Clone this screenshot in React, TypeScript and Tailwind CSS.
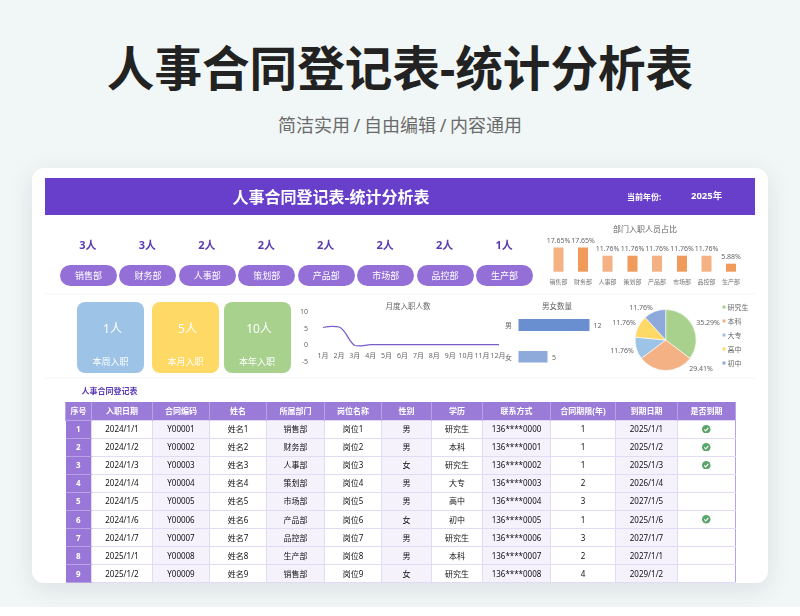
import React from "react";

const depts = [
  ["销售部", "3人"], ["财务部", "3人"], ["人事部", "2人"], ["策划部", "2人"],
  ["产品部", "2人"], ["市场部", "2人"], ["品控部", "2人"], ["生产部", "1人"],
];

const headers = ["序号", "入职日期", "合同编码", "姓名", "所属部门", "岗位名称", "性别", "学历", "联系方式", "合同期限(年)", "到期日期", "是否到期"];
const colClasses = ["w-[26px]", "w-[61px]", "w-[57px]", "w-[57px]", "w-[58px]", "w-[57px]", "w-[50px]", "w-[51px]", "w-[68px]", "w-[65px]", "w-[62px]", "w-[58px]"];

const rows: [string, string, string, string, string, string, string, string, string, string, boolean][] = [
  ["2024/1/1", "Y00001", "姓名1", "销售部", "岗位1", "男", "研究生", "136****0000", "1", "2025/1/1", true],
  ["2024/1/2", "Y00002", "姓名2", "财务部", "岗位2", "男", "本科", "136****0001", "1", "2025/1/2", true],
  ["2024/1/3", "Y00003", "姓名3", "人事部", "岗位3", "女", "研究生", "136****0002", "1", "2025/1/3", true],
  ["2024/1/4", "Y00004", "姓名4", "策划部", "岗位4", "男", "大专", "136****0003", "2", "2026/1/4", false],
  ["2024/1/5", "Y00005", "姓名5", "市场部", "岗位5", "男", "高中", "136****0004", "3", "2027/1/5", false],
  ["2024/1/6", "Y00006", "姓名6", "产品部", "岗位6", "女", "初中", "136****0005", "1", "2025/1/6", true],
  ["2024/1/7", "Y00007", "姓名7", "品控部", "岗位7", "男", "研究生", "136****0006", "3", "2027/1/7", false],
  ["2025/1/1", "Y00008", "姓名8", "生产部", "岗位8", "男", "本科", "136****0007", "2", "2027/1/1", false],
  ["2025/1/2", "Y00009", "姓名9", "销售部", "岗位9", "女", "研究生", "136****0008", "4", "2029/1/2", false],
];

const deptBars = [
  { x: 553.5, top: 247.5, label: "17.65%", name: "销售部", fill: "#f4b183" },
  { x: 578, top: 247.5, label: "17.65%", name: "财务部", fill: "#f09a5c" },
  { x: 602.5, top: 255.7, label: "11.76%", name: "人事部", fill: "#f4b183" },
  { x: 627.5, top: 255.7, label: "11.76%", name: "策划部", fill: "#f09a5c" },
  { x: 652, top: 255.7, label: "11.76%", name: "产品部", fill: "#f4b183" },
  { x: 677, top: 255.7, label: "11.76%", name: "市场部", fill: "#f09a5c" },
  { x: 701.5, top: 255.7, label: "11.76%", name: "品控部", fill: "#f4b183" },
  { x: 726, top: 263.7, label: "5.88%", name: "生产部", fill: "#f09a5c" },
];

const months = ["1月", "2月", "3月", "4月", "5月", "6月", "7月", "8月", "9月", "10月", "11月", "12月"];

const pie = [
  { v: 35.29, c: "#a9d18e", n: "研究生" },
  { v: 29.41, c: "#f4b183", n: "本科" },
  { v: 11.76, c: "#9dc3e6", n: "大专" },
  { v: 11.76, c: "#ffd966", n: "高中" },
  { v: 11.76, c: "#8eaadb", n: "初中" },
];

function pieSlices(cx: number, cy: number, r: number) {
  let a = 0;
  const total = pie.reduce((s, p) => s + p.v, 0);
  return pie.map((p) => {
    const a0 = a;
    a += (p.v / total) * Math.PI * 2;
    const x0 = cx + r * Math.sin(a0);
    const y0 = cy - r * Math.cos(a0);
    const x1 = cx + r * Math.sin(a);
    const y1 = cy - r * Math.cos(a);
    const large = a - a0 > Math.PI ? 1 : 0;
    return { d: `M${cx} ${cy}L${x0} ${y0}A${r} ${r} 0 ${large} 1 ${x1} ${y1}Z`, c: p.c };
  });
}

function Check() {
  return (
    <svg viewBox="0 0 10 10" className="mx-auto block w-[8.5px] h-[8.5px]">
      <circle cx="5" cy="5" r="5" fill="#5aa469" />
      <path d="M2.6 5.2 L4.4 7 L7.5 3.5" fill="none" stroke="#fff" strokeWidth="1.3" />
    </svg>
  );
}

function Kpi({ value, label, className }: { value: string; label: string; className: string }) {
  return (
    <div className={`flex flex-col items-center h-[71px] w-[67px] rounded-lg text-white ${className}`}>
      <div className="mt-[19px] pl-[4px] text-[12px] leading-[16px]">{value}</div>
      <div className="mt-[19px] text-[9px] leading-[12px]">{label}</div>
    </div>
  );
}

const font = { fontFamily: "'Noto Sans','Noto Sans CJK SC',sans-serif" };

export default function App() {
  return (
    <div className="w-[800px] h-[616px] bg-white overflow-hidden" style={font}>
      <div className="h-[607px] bg-[#f1f6f6] flex flex-col items-center overflow-hidden">
        <h1 className="mt-[40px] text-[47.6px] leading-[56px] font-bold text-[#222222]">人事合同登记表-统计分析表</h1>
        <p className="mt-[17px] text-[18px] leading-[24px] text-[#6b6b6b] [word-spacing:-1px]">简洁实用 / 自由编辑 / 内容通用</p>

        <div className="mt-[31px] w-[736px] h-[415px] shrink-0 bg-white rounded-xl shadow-[0_6px_24px_rgba(60,80,90,0.12)] px-[13px] pt-[10px] overflow-hidden blur-[0.35px]">
          <header className="flex items-center h-[37px] bg-[#673fcb] text-white font-bold">
            <div className="w-[572px] text-center text-[16px]">人事合同登记表-统计分析表</div>
            <div className="ml-[10px] w-[64px] text-[8px]">当前年份:</div>
            <div className="text-[9.5px]">2025年</div>
          </header>

          <section className="flex h-[80px] border-b-2 border-[#fafafc]">
            <div className="w-[495px] pl-[15px] pr-[7px]">
              <div className="grid grid-cols-8 gap-x-[2.5px] mt-[22px]">
                {depts.map(([n, c]) => (
                  <div key={n} className="pr-[1px] text-center text-[11px] leading-[16px] font-bold text-[#5b3ab5]">{c}</div>
                ))}
              </div>
              <div className="grid grid-cols-8 gap-x-[2.5px] mt-[12px]">
                {depts.map(([n]) => (
                  <div key={n} className="h-[21px] rounded-full bg-[#946fd8] text-white text-[9px] flex items-center justify-center">{n}</div>
                ))}
              </div>
            </div>
            <svg viewBox="540 215 215 78" className="w-[215px] h-[78px]" fontFamily="'Noto Sans','Noto Sans CJK SC',sans-serif">
              <text x="645" y="232" fontSize="8" textAnchor="middle" fill="#666">部门入职人员占比</text>
              {deptBars.map((b) => (
                <g key={b.name}>
                  <rect x={b.x} y={b.top} width="10" height={271.7 - b.top} fill={b.fill} />
                  <text x={b.x + 5} y={b.top - 5} fontSize="7" textAnchor="middle" fill="#666">{b.label}</text>
                  <text x={b.x + 5} y="283.5" fontSize="6" textAnchor="middle" fill="#777">{b.name}</text>
                </g>
              ))}
            </svg>
          </section>

          <section className="flex h-[84px] border-b-2 border-[#fafafc]">
            <div className="w-[250px] pl-[32px] pt-[7px] flex items-start">
              <Kpi value="1人" label="本周入职" className="bg-[#9dc3e6]" />
              <Kpi value="5人" label="本月入职" className="ml-[8px] bg-[#ffd966]" />
              <Kpi value="10人" label="本年入职" className="ml-[4.5px] bg-[#a9d18e]" />
            </div>
            <svg viewBox="295 295 210 82" className="w-[210px] h-[82px]" fontFamily="'Noto Sans','Noto Sans CJK SC',sans-serif">
              <text x="408" y="309" fontSize="7.5" textAnchor="middle" fill="#666">月度入职人数</text>
              {[["10", 313.5], ["5", 330.5], ["0", 346.5], ["-5", 363.5]].map(([t, y]) => (
                <text key={t} x="308" y={y} fontSize="7" textAnchor="end" fill="#666">{t}</text>
              ))}
              <path d="M323 327.5 C328 326.5 334 326 339 327 C346 329 349 343 355 345.5 C360 346.7 365 345 371 344.7 L499 344.7" fill="none" stroke="#7a5bc8" strokeWidth="1.25" />
              {months.map((m, i) => (
                <text key={m} x={323 + i * 15.9} y="358" fontSize="7" textAnchor="middle" fill="#666">{m}</text>
              ))}
            </svg>
            <svg viewBox="505 295 100 82" className="w-[100px] h-[82px]" fontFamily="'Noto Sans','Noto Sans CJK SC',sans-serif">
              <text x="557" y="309" fontSize="7.5" textAnchor="middle" fill="#666">男女数量</text>
              <text x="505" y="328" fontSize="7" fill="#666">男</text>
              <rect x="518.5" y="319" width="71" height="12" fill="#6a8fd0" />
              <text x="593.5" y="328" fontSize="7" fill="#666">12</text>
              <text x="505" y="360" fontSize="7" fill="#666">女</text>
              <rect x="518.5" y="351" width="29" height="11.5" fill="#8eaadb" />
              <text x="552" y="360" fontSize="7" fill="#666">5</text>
            </svg>
            <svg viewBox="605 295 150 82" className="w-[150px] h-[82px]" fontFamily="'Noto Sans','Noto Sans CJK SC',sans-serif">
              {pieSlices(665.7, 340, 30.5).map((s, i) => (
                <path key={i} d={s.d} fill={s.c} stroke="#fff" strokeWidth="0.6" />
              ))}
              <text x="641" y="309.5" fontSize="7" textAnchor="middle" fill="#666">11.76%</text>
              <text x="624" y="324.5" fontSize="7" textAnchor="middle" fill="#666">11.76%</text>
              <text x="622" y="353" fontSize="7" textAnchor="middle" fill="#666">11.76%</text>
              <text x="708" y="324.5" fontSize="7" textAnchor="middle" fill="#666">35.29%</text>
              <text x="701" y="371" fontSize="7" textAnchor="middle" fill="#666">29.41%</text>
              {pie.map((p, i) => (
                <g key={p.n}>
                  <rect x="722.5" y={305.5 + i * 14} width="3" height="3" fill={p.c} />
                  <text x="727.5" y={309.7 + i * 14} fontSize="7" fill="#666">{p.n}</text>
                </g>
              ))}
            </svg>
          </section>

          <div className="pl-[36.5px] pt-[2px] h-[23px] text-[8px] leading-[20px] font-bold text-[#5b3ab5]">人事合同登记表</div>

          <div className="ml-[20px] w-[670px]">
            <table className="table-fixed w-[670px] border-collapse text-[8px] text-[#111111]">
              <colgroup>
                {colClasses.map((c, i) => (<col key={i} className={c} />))}
              </colgroup>
              <thead>
                <tr className="h-[18px] bg-[#9b7bd8] text-white">
                  {headers.map((h) => (
                    <th key={h} className="p-0 font-bold border-x border-[#b7a2e6]">{h}</th>
                  ))}
                </tr>
              </thead>
              <tbody>
                {rows.map((r, i) => (
                  <tr key={i} className="h-[18.1px]">
                    <td className="p-0 text-center font-bold text-white bg-[#9877d9] border-y border-[#b7a2e6]">{i + 1}</td>
                    {r.map((c, j) => (
                      <td key={j} className={`p-0 text-center border border-[#e2dbf6] ${j % 2 === 1 ? "bg-[#f5f2fc]" : "bg-white"} ${j === 10 ? "border-r-[#b7a2e6]" : ""}`}>
                        {j === 10 ? (c ? <Check /> : null) : c}
                      </td>
                    ))}
                  </tr>
                ))}
              </tbody>
            </table>
          </div>
        </div>
      </div>
    </div>
  );
}
